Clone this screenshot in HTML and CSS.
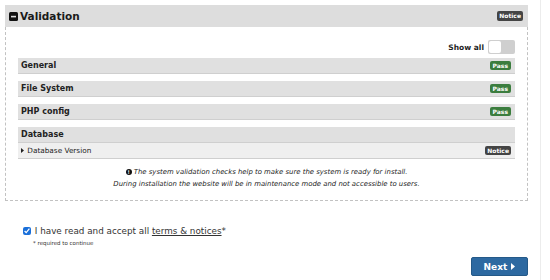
FILE: index.html
```html
<!DOCTYPE html>
<html lang="en">
<head>
    <meta charset="UTF-8">
    <title>Install - Validation</title>
    <link rel="stylesheet" href="styles.css">
</head>
<body>

<div class="page">
    <!-- Validation panel -->
    <div class="panel">
        <div class="panel-head">
            <svg class="collapse-icon" width="9" height="9" viewBox="0 0 9 9">
                <rect x="0" y="0" width="9" height="9" rx="1.5" fill="#111"/>
                <rect x="2" y="3.8" width="5" height="1.6" fill="#ddd"/>
            </svg>
            <span class="panel-title">Validation</span>
            <span class="badge badge-notice">Notice</span>
        </div>

        <div class="panel-body">
            <div class="show-all">
                <span>Show all</span>
                <div class="toggle"><div class="knob"></div></div>
            </div>

            <div class="check">
                <div class="check-head">
                    <span>General</span>
                    <span class="badge badge-pass">Pass</span>
                </div>
            </div>
            <div class="check">
                <div class="check-head">
                    <span>File System</span>
                    <span class="badge badge-pass">Pass</span>
                </div>
            </div>
            <div class="check">
                <div class="check-head">
                    <span>PHP config</span>
                    <span class="badge badge-pass">Pass</span>
                </div>
            </div>
            <div class="check">
                <div class="check-head">
                    <span>Database</span>
                </div>
                <div class="check-item">
                    <span><svg class="caret" width="3" height="5" viewBox="0 0 3 5"><path d="M0 0 L3 2.5 L0 5 Z" fill="#222"/></svg> Database Version</span>
                    <span class="badge badge-notice">Notice</span>
                </div>
            </div>

            <div class="info">
                <p><span class="info-icon">!</span> The system validation checks help to make sure the system is ready for install.</p>
                <p>During installation the website will be in maintenance mode and not accessible to users.</p>
            </div>
        </div>
    </div>

    <!-- Terms -->
    <div class="terms">
        <label class="terms-label">
            <input type="checkbox" checked> I have read and accept all <a href="#">terms &amp; notices</a>*
        </label>
        <div class="required">* required to continue</div>
    </div>

    <div class="actions">
        <button class="btn-next">Next <svg class="arrow" width="4" height="7" viewBox="0 0 4 7"><path d="M0 0 L4 3.5 L0 7 Z" fill="#fff"/></svg></button>
    </div>
</div>

</body>
</html>
```

FILE: styles.css
```css
body {
    margin: 0;
    padding: 0;
    font-family: "DejaVu Sans", Verdana, sans-serif;
    color: #222;
    background: #fff;
}

.page {
    width: 541px;
    min-height: 280px;
    box-sizing: border-box;
    padding: 5px 0 0 5px;
    border-right: 1px solid #ececec;
}

.panel {
    width: 523px;
}

.panel-head {
    display: flex;
    align-items: center;
    height: 22px;
    background: #dddddd;
    padding: 0 5px 0 4px;
}

.collapse-icon {
    margin-right: 2px;
}

.panel-title {
    font-size: 10.5px;
    font-weight: bold;
    color: #1a1a1a;
}

.badge {
    display: inline-block;
    font-size: 6px;
    font-weight: bold;
    color: #fff;
    padding: 1px 2px;
    border-radius: 2px;
    line-height: 7.5px;
}

.panel-head .badge {
    margin-left: auto;
}

.badge-notice {
    background: #444;
}

.badge-pass {
    background: #3b7d3e;
    padding: 1px 3px;
}

.panel-body {
    border: 1px dashed #c2c2c2;
    border-top: none;
    padding: 13px 12px 10px 12px;
}

.show-all {
    display: flex;
    justify-content: flex-end;
    align-items: center;
    gap: 4px;
    font-size: 7.5px;
    font-weight: bold;
    height: 14px;
    margin-bottom: 4px;
}

.toggle {
    display: flex;
    width: 27px;
    height: 14px;
    background: #cfcfcf;
    border-radius: 2px;
    padding: 1px;
    box-sizing: border-box;
}

.knob {
    width: 12px;
    height: 12px;
    background: #fff;
    border-radius: 2px;
}

.check {
    margin-bottom: 7px;
}

.check-head,
.check-item {
    display: flex;
    justify-content: space-between;
    align-items: center;
    height: 16px;
    box-sizing: border-box;
    padding: 0 4px 0 3px;
    border-bottom: 1px solid #cfcfcf;
}

.check-head {
    background: #e0e0e0;
    font-size: 8px;
    font-weight: bold;
}

.check-item {
    background: #efefef;
    font-size: 7.3px;
    padding-left: 2px;
}

.caret {
    margin: 0 1px 0 1px;
}

.info {
    text-align: center;
    font-style: italic;
    font-size: 6.9px;
    color: #222;
    margin-top: 7px;
}

.info p {
    margin: 0;
    line-height: 12px;
}

.info-icon {
    display: inline-block;
    width: 6px;
    height: 6px;
    line-height: 6px;
    border-radius: 50%;
    background: #111;
    color: #fff;
    font-style: normal;
    font-weight: bold;
    font-size: 5px;
    text-align: center;
}

.terms {
    margin: 18px 0 0 18px;
}

.terms-label {
    font-size: 8.8px;
    color: #333;
}

.terms-label input {
    width: 8px;
    height: 8px;
    margin: 0 1px 0 0;
    vertical-align: -0.5px;
    accent-color: #1a6fd9;
}

.terms-label a {
    color: #333;
}

.required {
    font-size: 5.5px;
    color: #333;
    margin: 2px 0 0 10px;
}

.actions {
    display: flex;
    justify-content: flex-end;
    width: 523px;
    margin-top: 11px;
}

.btn-next {
    width: 57px;
    height: 19px;
    background: #2d69a1;
    border: 1px solid #245988;
    border-radius: 2px;
    color: #fff;
    font-family: "DejaVu Sans", Verdana, sans-serif;
    font-size: 9px;
    font-weight: bold;
    cursor: pointer;
    padding: 0;
}

.arrow {
    margin-left: 1px;
}
```
